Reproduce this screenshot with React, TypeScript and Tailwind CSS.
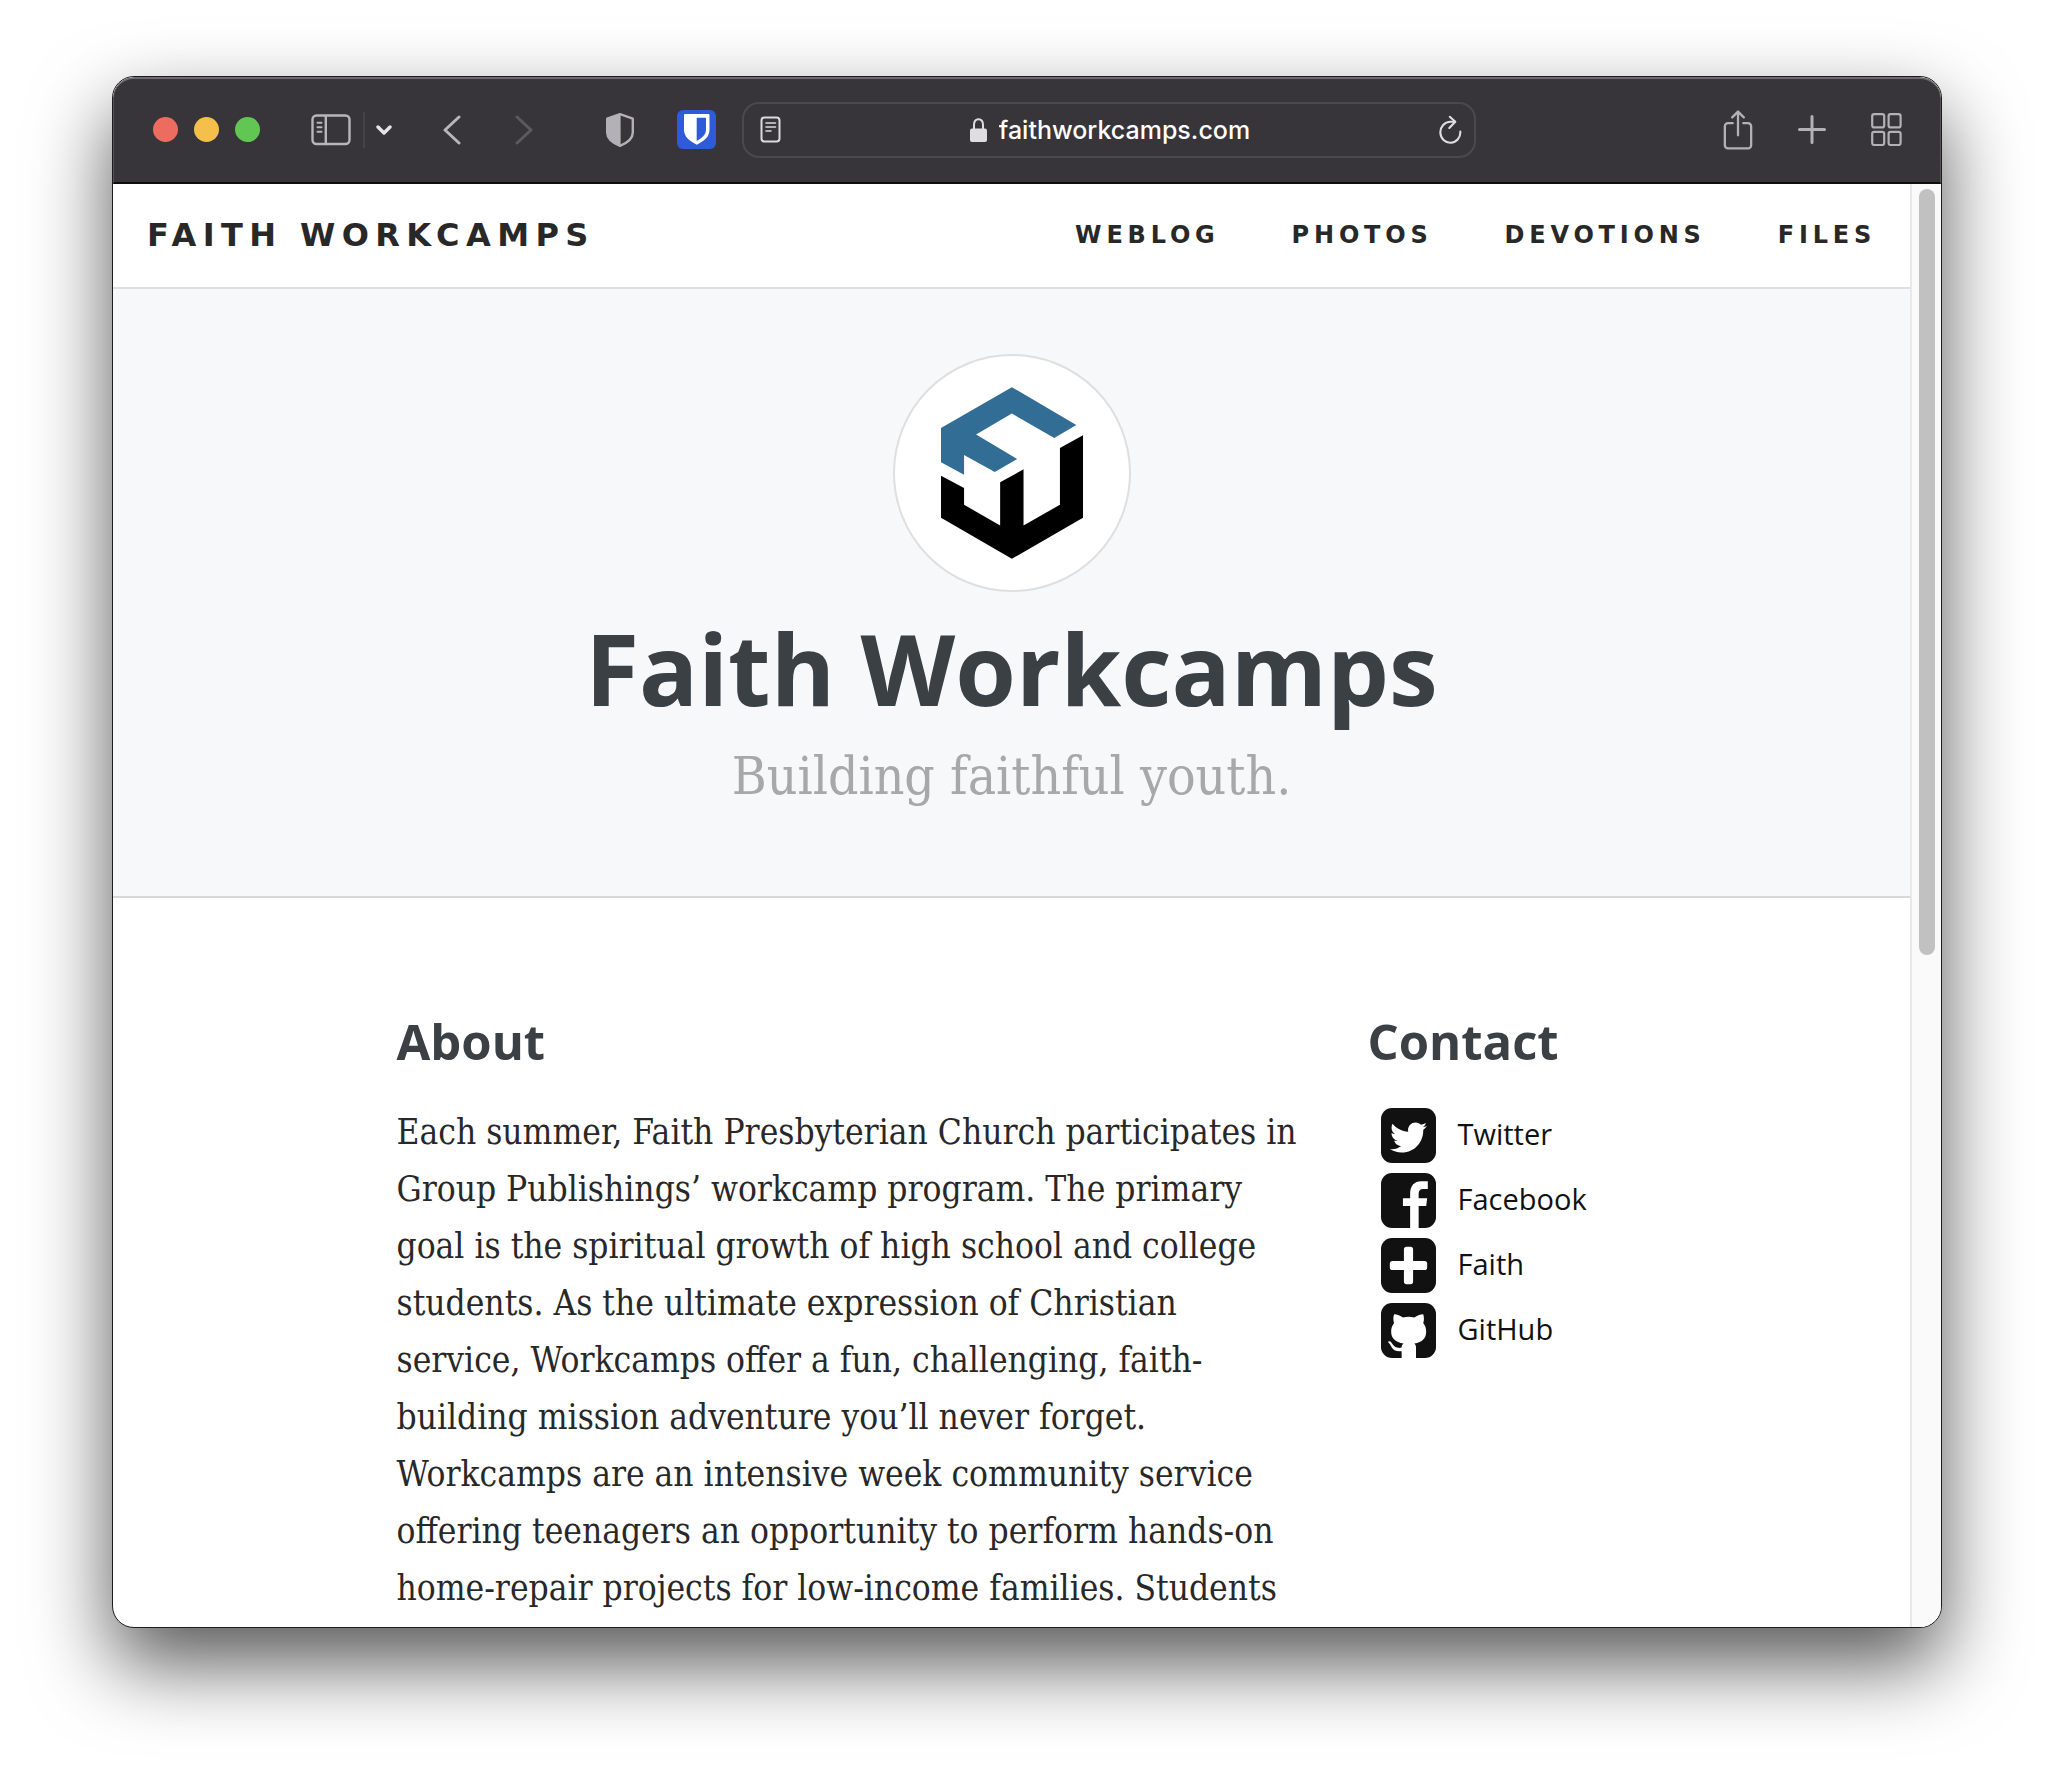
import React from "react";
import { FaTwitter } from "react-icons/fa";

const navLinks = ["Weblog", "Photos", "Devotions", "Files"];

const aboutLines = [
  "Each summer, Faith Presbyterian Church participates in",
  "Group Publishings’ workcamp program. The primary",
  "goal is the spiritual growth of high school and college",
  "students. As the ultimate expression of Christian",
  "service, Workcamps offer a fun, challenging, faith-",
  "building mission adventure you’ll never forget.",
  "Workcamps are an intensive week community service",
  "offering teenagers an opportunity to perform hands-on",
  "home-repair projects for low-income families. Students",
];

function SidebarIcon() {
  return (
    <svg width="40" height="32" viewBox="0 0 40 32" fill="none" stroke="#b9b5bc" strokeWidth="2.4" strokeLinecap="round">
      <rect x="1.5" y="1.5" width="37" height="28.5" rx="4" />
      <path d="M14.8 2v28" />
      <path d="M6.5 8.7h4M6.5 13.2h4M6.5 17.7h4" strokeWidth="2" />
    </svg>
  );
}

function Chevron({ d, w, h, color, sw }: { d: string; w: number; h: number; color: string; sw: number }) {
  return (
    <svg width={w} height={h} viewBox={`0 0 ${w} ${h}`} fill="none" stroke={color} strokeWidth={sw} strokeLinecap="round" strokeLinejoin="round">
      <path d={d} />
    </svg>
  );
}

function ShieldIcon() {
  return (
    <svg width="28" height="34" viewBox="0 0 28 34">
      <path d="M14 1.2 26.8 5.6V19.5c0 6.5-6 10.6-12.8 13.3C7.2 30.1 1.2 26 1.2 19.5V5.6Z" fill="none" stroke="#b4b0b7" strokeWidth="2.4" strokeLinejoin="round" />
      <path d="M14.6 1 1 5.6V19.5C1 26 7 30.5 14.6 33Z" fill="#b4b0b7" />
    </svg>
  );
}

function BitwardenIcon() {
  return (
    <svg width="39" height="39" viewBox="0 0 39 39">
      <rect width="39" height="39" rx="6" fill="#2f5bd9" />
      <path d="M8 4h23.500a1 1 0 0 1 1 1v14.500c0 7.500-5.500 11.500-12.700 15.300C12.500 31 7 27 7 19.500V5a1 1 0 0 1 1-1Z" fill="#fff" />
      <path d="M19.700 7.800h9.300v12c0 5-3.800 7.900-9.300 11.200Z" fill="#2f5bd9" />
    </svg>
  );
}

function ReaderIcon() {
  return (
    <svg width="21" height="27" viewBox="0 0 21 27" fill="none" stroke="#dcdadd" strokeWidth="2" strokeLinecap="round">
      <rect x="1.500" y="1.500" width="18" height="24" rx="3" />
      <path d="M6 7h9.500M6 11h9.500M6 15h5" strokeWidth="1.600" />
    </svg>
  );
}

function LockIcon() {
  return (
    <svg width="17" height="24" viewBox="0 0 17 24">
      <path d="M4 11V7c0-3.500 1.800-5.800 4.500-5.800S13 3.500 13 7v4" fill="none" stroke="#dfdddf" strokeWidth="2" />
      <rect x="0" y="10.500" width="17" height="13.500" rx="2" fill="#dfdddf" />
    </svg>
  );
}

function ReloadIcon() {
  return (
    <svg width="23" height="29" viewBox="0 0 23 29" fill="none" stroke="#dfdddf" strokeWidth="2.1" strokeLinecap="round" strokeLinejoin="round">
      <path d="M21.300 16.500A10 10.500 0 1 1 11.300 6.800H16" />
      <path d="M10.800 1.800l5.500 5L10.300 13" />
    </svg>
  );
}

function ShareIcon() {
  return (
    <svg width="30" height="40" viewBox="0 0 28 38" fill="none" stroke="#b4b0b7" strokeWidth="2.200" strokeLinecap="round" strokeLinejoin="round">
      <path d="M9 12.500H4.500a3 3 0 0 0-3 3v18a3 3 0 0 0 3 3h19a3 3 0 0 0 3-3v-18a3 3 0 0 0-3-3H19" />
      <path d="M14 24V1.500M8.500 7 14 1.500 19.500 7" />
    </svg>
  );
}

function PlusIcon() {
  return (
    <svg width="28" height="29" viewBox="0 0 28 29" fill="none" stroke="#b4b0b7" strokeWidth="3" strokeLinecap="round">
      <path d="M14 1.500v26M1.500 14.500h25" />
    </svg>
  );
}

function GridIcon() {
  return (
    <svg width="31" height="33" viewBox="0 0 31 33" fill="none" stroke="#b4b0b7" strokeWidth="2.2">
      <rect x="1.200" y="1.200" width="12" height="13.200" rx="2" />
      <rect x="17.600" y="1.200" width="12" height="13.200" rx="2" />
      <rect x="1.200" y="18.800" width="12" height="13.200" rx="2" />
      <rect x="17.600" y="18.800" width="12" height="13.200" rx="2" />
    </svg>
  );
}

function Logo() {
  return (
    <svg width="142" height="172" viewBox="183 141 425 514">
      <path fill="#326d95" d="M395 141 588 254 522 293 395 220 288 283 411 356 344 395 252 344V403L183 366V263Z" />
      <path fill="#000" d="M183 406 252 443V493L360 555V426L430 387V555L539 493V323L608 285V532L395 655 183 532Z" />
    </svg>
  );
}

function Tile({ children }: { children: React.ReactNode }) {
  return (
    <span className="flex size-[55px] shrink-0 items-center justify-center overflow-hidden rounded-[11px] bg-[#111]">{children}</span>
  );
}

const contacts = [
  { label: "Twitter", icon: <FaTwitter size={37} color="#fff" className="mt-1" /> },
  {
    label: "Facebook",
    icon: (
      <svg width="55" height="55" viewBox="0 0 168 168">
        <path fill="#fff" d="M89 168V101H67V77h22V64c0-25 12-39 34-39h20v24h-14c-10 0-14 5-14 14v14h26l-3 24h-23v67Z" />
      </svg>
    ),
  },
  {
    label: "Faith",
    icon: (
      <svg width="55" height="55" viewBox="0 0 168 168" fill="#fff">
        <rect x="70" y="27" width="28" height="114" rx="8" />
        <rect x="27" y="70" width="114" height="28" rx="8" />
      </svg>
    ),
  },
  {
    label: "GitHub",
    icon: (
      <svg width="55" height="55" viewBox="0 0 168 168">
        <path
          fill="#fff"
          d="M40 34c10 0 19 4 27 10 11-3 24-3 35 0 8-6 17-10 27-10 3 9 3 18 0 27 7 9 9 17 9 27 0 20-12 32-36 36 4 4 5 8 5 13v31H63v-21c-16 2-25-2-30-11-4-8-7-13-12-17 3-3 8-2 10 1 6 9 11 16 22 17 4 1 8 0 10-1 0-5 2-9 6-12-25-4-38-16-38-36 0-10 2-18 9-27-3-9-3-18 0-27Z"
        />
      </svg>
    ),
  },
];

export default function App() {
  return (
    <div className="flex min-h-screen flex-col bg-white px-[112px] pt-[76px] pb-[148px]">
      <div className="flex flex-1 flex-col overflow-hidden rounded-[22px] border border-[#1c1b1e] bg-white shadow-[0_36px_80px_rgba(0,0,0,0.66)]">
        <header className="flex h-[107px] items-center rounded-t-[21px] border-x border-t-2 border-b-2 border-x-[#57555a] border-t-[#6d6b70] border-b-[#0d0d0e] bg-[#373539] pr-[38px] pb-0.5 pl-[39px]">
          <div className="flex gap-4">
            <button aria-label="Close" className="size-[25px] rounded-full bg-[#ec6d5f]" />
            <button aria-label="Minimize" className="size-[25px] rounded-full bg-[#f4bf4a]" />
            <button aria-label="Zoom" className="size-[25px] rounded-full bg-[#62c653]" />
          </div>
          <button aria-label="Sidebar" className="ml-[51px]"><SidebarIcon /></button>
          <span className="ml-3 h-9 w-0.5 bg-[#454348]" />
          <button aria-label="Tab groups" className="ml-[11px]"><Chevron d="M2 3l6 6 6-6" w={16} h={12} color="#e6e4e7" sw={3.4} /></button>
          <button aria-label="Back" className="ml-[51px]"><Chevron d="M16 2 2 15l14 13" w={18} h={30} color="#b9b5bc" sw={3} /></button>
          <button aria-label="Forward" className="ml-[54px]"><Chevron d="M2 2l14 13L2 28" w={18} h={30} color="#5c5a5f" sw={3} /></button>
          <button aria-label="Privacy report" className="ml-[73px]"><ShieldIcon /></button>
          <button aria-label="Bitwarden" className="ml-[43px]"><BitwardenIcon /></button>
          <div className="ml-[26px] flex h-14 flex-1 items-center rounded-[17px] border-2 border-[#4b494e] pr-3 pl-4 font-['Inter',sans-serif] text-[25px] text-white">
            <button aria-label="Reader"><ReaderIcon /></button>
            <label className="flex flex-1 items-center justify-center gap-3">
              <LockIcon />
              <input aria-label="Address" defaultValue="faithworkcamps.com" className="field-sizing-content bg-transparent pt-0.5 font-medium outline-none" />
            </label>
            <button aria-label="Reload"><ReloadIcon /></button>
          </div>
          <div className="ml-[247px] flex items-center gap-[45px]">
            <button aria-label="Share"><ShareIcon /></button>
            <button aria-label="New tab"><PlusIcon /></button>
            <button aria-label="Tab overview"><GridIcon /></button>
          </div>
        </header>

        <div className="flex flex-1">
          <div className="flex-1">
            <nav className="flex h-[105px] items-center justify-between border-b-2 border-[#dedfe0] pr-[34px] pb-0.5 pl-[34px] font-['DejaVu_Sans',sans-serif] font-bold text-[#282828] uppercase">
              <a href="#" className="text-[32px] tracking-[0.2em]">Faith Workcamps</a>
              <div className="flex gap-[72px] text-[24px] tracking-[0.2em]">
                {navLinks.map((l) => (
                  <a key={l} href="#">{l}</a>
                ))}
              </div>
            </nav>

            <section className="flex flex-col items-center border-b-2 border-[#d6d8da] bg-[#f7f8fa] pt-[65px] pb-[84px]">
              <div className="flex size-[238px] items-center justify-center rounded-full border-2 border-[#dedfe0] bg-white">
                <Logo />
              </div>
              <h1 className="mt-4 font-['Open_Sans',sans-serif] text-[98px] leading-[120px] font-bold text-[#3b4045]">Faith Workcamps</h1>
              <p className="mt-3 font-['DejaVu_Serif_Condensed','DejaVu_Serif',serif] text-[53px] leading-[72px] text-[#a8a8a8]">Building faithful youth.</p>
            </section>

            <main className="mx-auto flex w-[1230px] gap-10 pt-[108px]">
              <section className="w-[931px]">
                <h2 className="font-['Open_Sans',sans-serif] text-[49px] leading-[70px] font-bold text-[#3b4045]">About</h2>
                <p className="mt-7 font-['DejaVu_Serif_Condensed','DejaVu_Serif',serif] text-[35px] leading-[57px] whitespace-nowrap text-[#282828]">
                  {aboutLines.map((line) => (
                    <React.Fragment key={line}>
                      {line}
                      <br />
                    </React.Fragment>
                  ))}
                </p>
              </section>
              <section>
                <h2 className="font-['Open_Sans',sans-serif] text-[49px] leading-[70px] font-bold text-[#3b4045]">Contact</h2>
                <ul className="mt-8 flex flex-col gap-2.5 pl-[13px] font-['Open_Sans',sans-serif] text-[29px] leading-[52px] text-[#111]">
                  {contacts.map((c) => (
                    <li key={c.label}>
                      <a href="#" className="flex gap-[22px]">
                        <Tile>{c.icon}</Tile>
                        {c.label}
                      </a>
                    </li>
                  ))}
                </ul>
              </section>
            </main>
          </div>
          <div className="flex w-[31px] justify-center border-l-2 border-[#e8e8e8] bg-[#fafafa] pt-[5px]">
            <div className="h-[766px] w-4 rounded-full bg-[#c1c1c1]" />
          </div>
        </div>
      </div>
    </div>
  );
}
